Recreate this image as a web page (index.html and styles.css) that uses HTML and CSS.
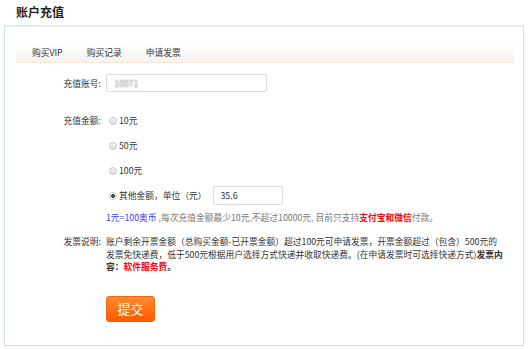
FILE: index.html
```html
<!DOCTYPE html>
<html lang="zh-CN">
<head>
    <meta charset="UTF-8">
    <title>账户充值</title>
    <link rel="stylesheet" href="styles.css">
</head>
<body>
    <h1 class="page-title">账户充值</h1>

    <div class="panel">
        <!-- 选项卡 -->
        <div class="tabs">
            <a class="tab">购买VIP</a>
            <a class="tab">购买记录</a>
            <a class="tab">申请发票</a>
        </div>

        <form class="recharge-form">
            <div class="row row-account">
                <label class="row-label">充值账号:</label>
                <input class="text-input account-input" type="text" value="10071">
            </div>

            <div class="row amount-row">
                <label class="row-label">充值金额:</label>
                <label class="radio-item"><input type="radio" name="amount"> 10元</label>
            </div>
            <div class="row amount-row">
                <span class="row-label"></span>
                <label class="radio-item"><input type="radio" name="amount"> 50元</label>
            </div>
            <div class="row amount-row">
                <span class="row-label"></span>
                <label class="radio-item"><input type="radio" name="amount"> 100元</label>
            </div>
            <div class="row amount-row">
                <span class="row-label"></span>
                <label class="radio-item"><input type="radio" name="amount" checked> 其他金额，单位（元）</label>
                <input class="text-input other-input" type="text" value="35.6">
            </div>

            <div class="row row-tip">
                <span class="row-label"></span>
                <p class="tip"><span class="tip-rate">1元=100奥币</span> ,每次充值金额最少10元,不超过10000元, 目前只支持<b class="red">支付宝和微信</b>付款。</p>
            </div>

            <div class="row row-invoice">
                <span class="row-label">发票说明:</span>
                <p class="invoice-text">账户剩余开票金额（总购买金额-已开票金额）超过100元可申请发票，开票金额超过（包含）500元的发票免快递费，低于500元根据用户选择方式快递并收取快递费。(在申请发票时可选择快递方式) <b>发票内容：</b><b class="red">软件服务费</b><b>。</b></p>
            </div>

            <div class="row row-submit">
                <span class="row-label"></span>
                <button type="button" class="submit-btn">提交</button>
            </div>
        </form>
    </div>
</body>
</html>
```

FILE: styles.css
```css
body {
    margin: 0;
    font-family: "Noto Sans CJK SC", "Liberation Sans", sans-serif;
    font-size: 8.75px;
    color: #333;
    background: #fff;
}

.page-title {
    margin: 0;
    padding: 5px 0 0 16px;
    font-size: 12px;
    line-height: 14px;
    font-weight: 700;
    color: #222;
}

.panel {
    box-sizing: border-box;
    width: 520px;
    height: 321px;
    margin: 6px 0 0 4px;
    border: 1px solid #d2e4f4;
    box-shadow: inset 0 1px 0 #e8f1fa;
}

/* 选项卡 */
.tabs {
    display: flex;
    gap: 24px;
    height: 19px;
    margin: 17px 9px 0 11px;
    padding-left: 16px;
    background: linear-gradient(#fff, #f6f2ee);
    border-bottom: 1px solid #fbe9d8;
}

.tab {
    line-height: 19px;
    color: #333;
    cursor: pointer;
}

/* 表单 */
.recharge-form {
    padding-top: 11px;
}

.row {
    display: flex;
    align-items: center;
}

.row-label {
    flex: 0 0 96px;
    padding-right: 5px;
    text-align: right;
    color: #333;
}

.text-input {
    box-sizing: border-box;
    border: 1px solid #dcdcdc;
    border-radius: 2px;
    font-family: inherit;
    font-size: 8.75px;
    padding: 0 7px;
    outline: none;
}

.account-input {
    width: 161px;
    height: 18px;
    color: transparent;
    text-shadow: 0 0 2px #888;
}

.row-account {
    margin-bottom: 16px;
}

.amount-row {
    height: 25px;
}

.radio-item {
    display: flex;
    align-items: center;
    gap: 2px;
    margin-left: 3px;
    line-height: 14px;
}

.radio-item input {
    appearance: none;
    width: 8px;
    height: 8px;
    margin: 0;
    border: 1px solid #c9c9c9;
    border-radius: 50%;
    background: linear-gradient(#f4f4f4, #dedede);
    box-sizing: border-box;
}

.radio-item input:checked {
    background: radial-gradient(circle, #444 0 1.6px, #eee 2px);
}

.other-input {
    width: 70px;
    height: 19px;
    margin-left: 6px;
    color: #333;
}

.row-tip {
    margin-top: 3px;
}

.tip {
    margin: 0;
    line-height: 14px;
    color: #777;
}

.tip-rate {
    color: #3b3bf2;
}

.red {
    color: #f00;
}

.row-invoice {
    align-items: flex-start;
    margin-top: 11px;
}

.row-invoice .row-label {
    line-height: 12.5px;
}

.invoice-text {
    width: 398.5px;
    margin: 0;
    line-height: 12.5px;
    word-spacing: -2px;
    color: #333;
}

.row-submit {
    margin-top: 22px;
}

.submit-btn {
    width: 49px;
    height: 26px;
    padding: 0;
    border: 1px solid #f2660c;
    border-radius: 3px;
    background: linear-gradient(#ff8b2e, #ff5a00);
    color: #fff;
    font-family: inherit;
    font-size: 13px;
    cursor: pointer;
}
```
